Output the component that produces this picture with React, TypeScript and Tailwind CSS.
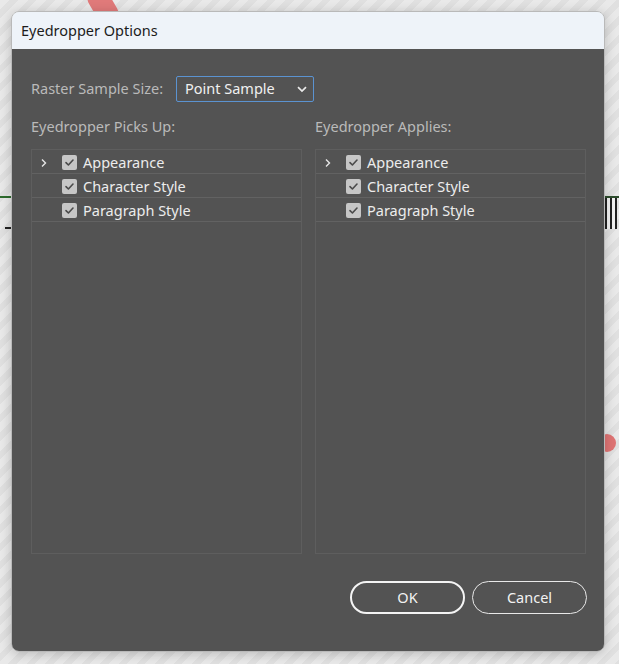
import React, { useState } from 'react';

const font = { fontFamily: '"Noto Sans", "Open Sans", sans-serif' };

const Check: React.FC = () => (
  <span className="w-[15px] h-[15px] rounded-[2px] bg-[#c6c6c6] flex items-center justify-center shrink-0">
    <svg width="11" height="11" viewBox="0 0 11 11">
      <path d="M2 5.6 L4.4 8 L9 3" fill="none" stroke="#4a4a4a" strokeWidth="1.6" strokeLinecap="round" strokeLinejoin="round" />
    </svg>
  </span>
);

const rows = ['Appearance', 'Character Style', 'Paragraph Style'];

const OptionList: React.FC = () => (
  <div className="w-[271px] h-[405px] border border-[#5e5e5e] flex flex-col">
    {rows.map((label, i) => (
      <div key={label} className="h-[24px] border-b border-[#626262] flex items-center pt-[2px]">
        <span className="w-[30px] pl-[7px] flex items-center">
          {i === 0 && (
            <svg width="10" height="10" viewBox="0 0 10 10">
              <path d="M3 1.5 L6.5 5 L3 8.5" fill="none" stroke="#e6e6e6" strokeWidth="1.4" />
            </svg>
          )}
        </span>
        <Check />
        <span className="ml-[6px] text-[14.5px] text-[#ececec] leading-none">{label}</span>
      </div>
    ))}
  </div>
);

const App: React.FC = () => {
  const [sample] = useState('Point Sample');

  return (
    <div
      className="relative w-[619px] h-[664px] overflow-hidden bg-[repeating-linear-gradient(135deg,#e9e9e9_0px,#e9e9e9_7px,#e0e0e0_7px,#e0e0e0_13px)]"
      style={font}
    >
      {/* canvas bits behind the dialog */}
      <div className="absolute left-[92px] -top-[14px] w-[22px] h-[40px] rounded-full bg-[#e07a7a] rotate-[-30deg]" />
      <div className="absolute left-[598px] top-[434px] w-[18px] h-[18px] rounded-full bg-[#df7474]" />
      <div className="absolute left-0 top-[196px] w-[14px] h-[2px] bg-[#2d6b2d]" />
      <div className="absolute left-[5px] top-[227px] w-[9px] h-[2px] bg-[#222]" />
      <div className="absolute left-[600px] top-[196px] w-[19px] h-[33px] border-t-2 border-[#2d4d2d] flex">
        <div className="w-[5px]" />
        <div className="w-[7px] border-x-2 border-[#222] bg-[#f2f2f2]" />
        <div className="w-[5px] border-r-2 border-[#222] bg-[#f2f2f2]" />
      </div>

      <div className="relative ml-[11px] mt-[11px] w-[594px] h-[641px] rounded-[8px] overflow-hidden border border-[#b9b9b9] shadow-[0_2px_12px_rgba(0,0,0,0.2)] flex flex-col">
        <div className="h-[37px] bg-[#eef3f9] flex items-center pl-[9px] text-[14.5px] text-[#1c1c1c] shrink-0">
          Eyedropper Options
        </div>
        <div className="flex-1 bg-[#535353] px-[19px] pt-[27px] flex flex-col">
          <div className="flex items-center h-[26px]">
            <span className="text-[14.5px] text-[#bababa] w-[145px]">Raster Sample Size:</span>
            <div className="w-[138px] h-[26px] border border-[#5b93d1] rounded-[2px] flex items-center justify-between pl-[8px] pr-[5px]">
              <span className="text-[14.5px] text-[#f0f0f0]">{sample}</span>
              <svg width="12" height="12" viewBox="0 0 12 12">
                <path d="M2 4.2 L6 8 L10 4.2" fill="none" stroke="#eaeaea" strokeWidth="1.7" />
              </svg>
            </div>
          </div>

          <div className="flex gap-[13px] mt-[13px]">
            <div className="flex flex-col">
              <span className="text-[14.5px] text-[#bababa] h-[24px] flex items-center">Eyedropper Picks Up:</span>
              <div className="mt-[10px]">
                <OptionList />
              </div>
            </div>
            <div className="flex flex-col">
              <span className="text-[14.5px] text-[#bababa] h-[24px] flex items-center">Eyedropper Applies:</span>
              <div className="mt-[10px]">
                <OptionList />
              </div>
            </div>
          </div>

          <div className="flex justify-end gap-[7px] mt-[27px]">
            <button className="w-[115px] h-[33px] rounded-full border-2 border-[#f4f4f4] text-[14.5px] text-[#f2f2f2]">
              OK
            </button>
            <button className="w-[115px] h-[33px] rounded-full border border-[#e8e8e8] text-[14.5px] text-[#f2f2f2] -mr-[2px]">
              Cancel
            </button>
          </div>
        </div>
      </div>
    </div>
  );
};

export default App;
